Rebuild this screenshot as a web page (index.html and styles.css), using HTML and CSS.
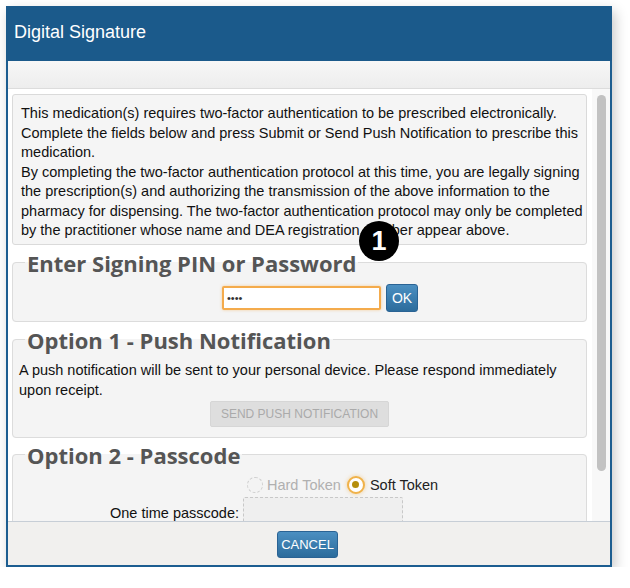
FILE: index.html
```html
<!DOCTYPE html>
<html>
<head>
<meta charset="utf-8">
<link rel="stylesheet" href="styles.css">
</head>
<body>
<div class="dialog">
  <div class="titlebar"><span class="title">Digital Signature</span></div>
  <div class="toolbar"></div>
  <div class="body">
    <div class="content">
      <div class="notice">This medication(s) requires two-factor authentication to be prescribed electronically.<br>Complete the fields below and press Submit or Send Push Notification to prescribe this<br>medication.<br>By completing the two-factor authentication protocol at this time, you are legally signing<br>the prescription(s) and authorizing the transmission of the above information to the<br>pharmacy for dispensing. The two-factor authentication protocol may only be completed<br>by the practitioner whose name and DEA registration number appear above.</div>
      <fieldset class="group">
        <legend>Enter Signing PIN or Password</legend>
        <div class="pin-row">
          <div class="pin-input">••••</div>
          <button class="btn btn-ok">OK</button>
        </div>
      </fieldset>
      <fieldset class="group">
        <legend>Option 1 - Push Notification</legend>
        <p class="push-text">A push notification will be sent to your personal device. Please respond immediately<br>upon receipt.</p>
        <button class="btn-disabled">SEND PUSH NOTIFICATION</button>
      </fieldset>
      <fieldset class="group group-last">
        <legend>Option 2 - Passcode</legend>
        <div class="radio-row">
          <span class="radio radio-off"></span><span class="radio-label off">Hard Token</span>
          <span class="radio radio-on"><span class="dot"></span></span><span class="radio-label on">Soft Token</span>
        </div>
        <div class="code-row">
          <span class="code-label">One time passcode:</span>
          <div class="code-input"></div>
        </div>
      </fieldset>
      <span class="badge">1</span>
    </div>
    <div class="scrollbar"><div class="thumb"></div></div>
  </div>
  <div class="footer"><button class="btn btn-cancel">CANCEL</button></div>
</div>
</body>
</html>
```
FILE: styles.css
```css
html, body {
  margin: 0;
  padding: 0;
  background: #ffffff;
}
body {
  font-family: "Liberation Sans", Arial, sans-serif;
}
.dialog {
  margin: 6px 0 0 6px;
  width: 606px;
  height: 561px;
  box-sizing: border-box;
  border: 2px solid #1c5d90;
  border-top: 0;
  display: flex;
  flex-direction: column;
  box-shadow: 3px 5px 12px rgba(0, 0, 0, 0.22);
  background: #fff;
}
.titlebar {
  height: 55px;
  flex: none;
  margin: 0 -2px;
  background: #1b5a8b;
  color: #ffffff;
  display: flex;
  align-items: center;
  padding: 0 0 3px 8px;
  box-sizing: border-box;
  font-size: 18px;
}
.toolbar {
  height: 28px;
  flex: none;
  box-sizing: border-box;
  background: linear-gradient(#f7f7f7, #ededed);
  border-bottom: 1px solid #dcdcdc;
}
.body {
  flex: 1;
  display: flex;
  overflow: hidden;
  min-height: 0;
}
.content {
  flex: 1;
  position: relative;
  padding: 5px 5px 0 4px;
  overflow: hidden;
}
.notice {
  background: #f5f5f5;
  border: 1px solid #dadada;
  border-radius: 3px;
  padding: 9px 8px 3px 8px;
  font-size: 14.5px;
  line-height: 19.5px;
  color: #111;
  white-space: nowrap;
}
.group {
  margin: 6px 0 0 0;
  border: 1px solid #dcdcdc;
  border-radius: 4px;
  background: #f4f4f4;
  padding: 0 6px 9px 6px;
  min-width: 0;
}
.group-last {
  margin-top: 5px;
}
.group legend {
  font-family: "Open Sans", "DejaVu Sans", sans-serif;
  font-weight: 700;
  font-size: 22px;
  line-height: 24px;
  color: #555555;
  padding: 0 2px;
  margin-left: 6px;
}
.pin-row {
  display: flex;
  align-items: center;
  padding: 9px 0 0 203px;
}
.pin-input {
  width: 159px;
  height: 24px;
  box-sizing: border-box;
  border: 2px solid #f4ab4c;
  border-radius: 2px;
  background: #fff;
  box-shadow: 0 0 3px rgba(245, 166, 60, 0.5);
  font-size: 11px;
  color: #333;
  padding-left: 3px;
  display: flex;
  align-items: center;
}
.btn {
  font-family: "Liberation Sans", Arial, sans-serif;
  color: #ffffff;
  background: linear-gradient(#4b8fc1, #2c6c9c);
  border: 1px solid #2a6394;
  border-radius: 3px;
  padding: 0;
  cursor: pointer;
}
.btn-ok {
  margin-left: 5px;
  width: 32px;
  height: 28px;
  font-size: 14px;
}
.push-text {
  margin: 8px 0 0 0;
  font-size: 14.5px;
  line-height: 20px;
  color: #111;
}
.btn-disabled {
  display: block;
  margin: 1px auto 1px;
  width: 179px;
  height: 26px;
  background: #dedede;
  border: 1px solid #d6d6d6;
  border-radius: 2px;
  color: #aaaaaa;
  font-family: "Liberation Sans", Arial, sans-serif;
  font-size: 12px;
  padding: 0;
}
.radio-row {
  display: flex;
  align-items: center;
  padding: 9px 0 0 228px;
  font-size: 14.5px;
  height: 18px;
}
.radio {
  width: 16px;
  height: 16px;
  box-sizing: border-box;
  border-radius: 50%;
  display: inline-flex;
  align-items: center;
  justify-content: center;
}
.radio-off {
  border: 1px dashed #cfcfcf;
  background: #f3f3f3;
}
.radio-on {
  border: 2px solid #f0b24a;
  background: #fff;
  box-shadow: 0 0 4px rgba(240, 178, 74, 0.55);
  margin-left: 6px;
  width: 18px;
  height: 18px;
}
.dot {
  width: 7px;
  height: 7px;
  border-radius: 50%;
  background: #b58e0c;
}
.radio-label {
  margin-left: 4px;
}
.radio-label.off {
  color: #b0b0b0;
}
.radio-label.on {
  color: #222;
  margin-left: 5px;
}
.code-row {
  display: flex;
  align-items: flex-start;
  margin-top: 3px;
}
.code-label {
  width: 220px;
  text-align: right;
  font-size: 14.5px;
  line-height: 16px;
  color: #111;
  padding-top: 8px;
}
.code-input {
  margin-left: 4px;
  width: 160px;
  height: 30px;
  box-sizing: border-box;
  border: 1px dashed #c8c8c8;
  background: #efefef;
  border-radius: 2px;
}
.badge {
  position: absolute;
  left: 351px;
  top: 132px;
  width: 40px;
  height: 40px;
  border-radius: 50%;
  background: #000;
  color: #fff;
  font-size: 27px;
  font-weight: 700;
  display: flex;
  align-items: center;
  justify-content: center;
}
.scrollbar {
  width: 18px;
  background: #f8f8f8;
  flex: none;
}
.thumb {
  margin: 6px auto 0;
  width: 9px;
  height: 376px;
  border-radius: 5px;
  background: #c2c2c2;
}
.footer {
  height: 44px;
  flex: none;
  border-top: 1px solid #c7ced6;
  background: #f1f0ee;
  display: flex;
  justify-content: center;
  align-items: flex-start;
  padding-top: 9px;
  box-sizing: border-box;
}
.btn-cancel {
  width: 61px;
  height: 27px;
  font-size: 13px;
  margin-left: -3px;
}
```
